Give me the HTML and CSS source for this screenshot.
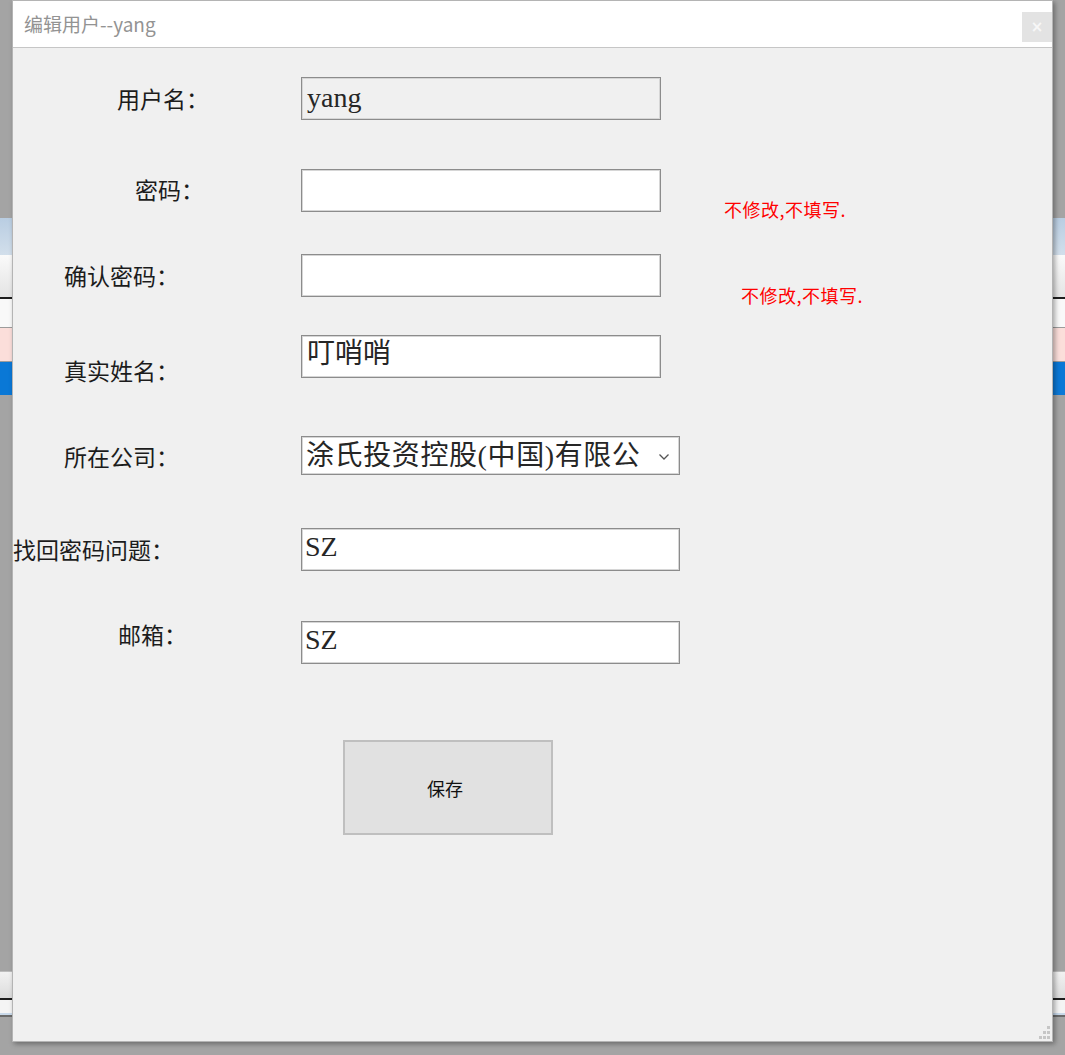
FILE: index.html
```html
<!DOCTYPE html>
<html lang="zh-CN">
<head>
<meta charset="utf-8">
<title>编辑用户</title>
<link rel="stylesheet" href="styles.css">
</head>
<body>
<div class="backdrop">
  <div class="bd-gap bd-gap-top"></div>
  <div class="bd-band bd-head"></div>
  <div class="bd-band bd-filter"></div>
  <div class="bd-band bd-rule"></div>
  <div class="bd-band bd-row"></div>
  <div class="bd-band bd-pink"></div>
  <div class="bd-band bd-blue"></div>
  <div class="bd-gap bd-gap-mid"></div>
  <div class="bd-band bd-foot"></div>
  <div class="bd-band bd-rule"></div>
  <div class="bd-band bd-foot2"></div>
  <div class="bd-band bd-line-blue"></div>
  <div class="bd-band bd-line-dark"></div>
</div>

<div class="dialog">
  <div class="dialog-title">
    <span class="title-text">编辑用户--yang</span>
    <button class="close-btn" type="button">×</button>
  </div>
  <div class="dialog-body">
    <form class="form">
      <div class="row row-1">
        <label class="label lbl-user">用户名：</label>
        <div class="field field-short field-readonly">yang</div>
      </div>
      <div class="row row-2">
        <label class="label lbl-pwd">密码：</label>
        <div class="field field-short"></div>
        <span class="hint hint-1">不修改,不填写.</span>
      </div>
      <div class="row row-3">
        <label class="label lbl-pwd2">确认密码：</label>
        <div class="field field-short"></div>
        <span class="hint hint-2">不修改,不填写.</span>
      </div>
      <div class="row row-4">
        <label class="label lbl-real lbl-low">真实姓名：</label>
        <div class="field field-short field-top">叮哨哨</div>
      </div>
      <div class="row row-5">
        <label class="label lbl-comp">所在公司：</label>
        <div class="select">
          <span class="select-text">涂氏投资控股(中国)有限公</span>
          <svg class="chev" width="12" height="8" viewBox="0 0 12 8"><path d="M1.5 1.5 L6 6 L10.5 1.5" fill="none" stroke="#555" stroke-width="1.3"/></svg>
        </div>
      </div>
      <div class="row row-6">
        <label class="label lbl-q">找回密码问题：</label>
        <div class="field field-long field-top">SZ</div>
      </div>
      <div class="row row-7">
        <label class="label lbl-mail lbl-high">邮箱：</label>
        <div class="field field-long field-top">SZ</div>
      </div>
      <div class="actions">
        <button class="save-btn" type="button">保存</button>
      </div>
    </form>
    <svg class="grip" width="14" height="14" viewBox="0 0 14 14">
      <rect x="10" y="0" width="3" height="3" fill="#c6c6c6"/>
      <rect x="6" y="5" width="3" height="3" fill="#c6c6c6"/>
      <rect x="10" y="5" width="3" height="3" fill="#c6c6c6"/>
      <rect x="2" y="10" width="3" height="3" fill="#c6c6c6"/>
      <rect x="6" y="10" width="3" height="3" fill="#c6c6c6"/>
      <rect x="10" y="10" width="3" height="3" fill="#c6c6c6"/>
    </svg>
  </div>
</div>
</body>
</html>
```

FILE: styles.css
```css
* { box-sizing: border-box; }

html, body {
  margin: 0;
  padding: 0;
  width: 1065px;
  height: 1055px;
  overflow: hidden;
  background: #a4a4a4;
  font-family: "Noto Sans CJK SC", "Noto Sans", sans-serif;
}

/* page behind the modal */
.backdrop {
  display: flex;
  flex-direction: column;
  width: 100%;
}
.bd-gap-top { height: 218px; }
.bd-head { height: 37px; background: linear-gradient(#b9cde2, #d2dfeb); }
.bd-filter { height: 42px; background: linear-gradient(#fafafa, #e4e4e4); }
.bd-rule { height: 2px; background: #1e1e1e; }
.bd-row { height: 29px; background: #f9f9f9; border-bottom: 1px solid #9c9c9c; }
.bd-pink { height: 34px; background: #fbdeda; border-bottom: 1px solid #9c9c9c; }
.bd-blue { height: 33px; background: #0a78d6; }
.bd-gap-mid { height: 576px; }
.bd-foot { height: 27px; background: linear-gradient(#f2f2f2, #dcdcdc); border-top: 1px solid #bdbdbd; }
.bd-foot2 { height: 13px; background: #f4f4f4; }
.bd-line-blue { height: 2px; background: #c9d9ea; }
.bd-line-dark { height: 2px; background: #6a6a6a; }

/* dialog */
.dialog {
  position: absolute;
  left: 12px;
  top: 0;
  width: 1041px;
  height: 1042px;
  background: #f0f0f0;
  border: 1px solid #b4b4b4;
  box-shadow: 2px 2px 5px rgba(0, 0, 0, 0.35);
  display: flex;
  flex-direction: column;
}

.dialog-title {
  height: 47px;
  flex: none;
  background: #fff;
  border-bottom: 1px solid #c6c6c6;
  display: flex;
  align-items: center;
  justify-content: space-between;
  padding-left: 11px;
}
.title-text {
  font-size: 19px;
  color: #939393;
  margin-top: -1px;
}
.close-btn {
  width: 30px;
  height: 30px;
  margin-top: 6px;
  margin-right: 0;
  border: none;
  background: #e3e3e3;
  color: #f7f7f7;
  font-family: "DejaVu Sans", sans-serif;
  font-size: 15px;
  font-weight: bold;
  line-height: 30px;
  padding: 0;
  text-align: center;
}

.dialog-body {
  flex: 1;
  position: relative;
}

.form {
  display: flex;
  flex-direction: column;
  padding-top: 29px;
}

.row {
  display: flex;
  align-items: flex-start;
  height: 43px;
}
.row-2 { margin-top: 49px; }
.row-3 { margin-top: 42px; }
.row-4 { margin-top: 38px; }
.row-5 { margin-top: 58px; height: 39px; }
.row-6 { margin-top: 53px; }
.row-7 { margin-top: 50px; }

.label {
  width: 288px;
  flex: none;
  font-size: 23px;
  line-height: 43px;
  color: #1c1c1c;
  white-space: nowrap;
}
.lbl-user { padding-left: 104px; }
.lbl-pwd { padding-left: 122px; margin-top: -1px; }
.lbl-pwd2 { padding-left: 51px; }
.lbl-real { padding-left: 51px; }
.lbl-comp { padding-left: 51px; margin-top: -1px; }
.lbl-q { padding-left: 0; }
.lbl-mail { padding-left: 105px; }
.lbl-low { margin-top: 14px; }
.lbl-high { margin-top: -8px; }

.field {
  height: 43px;
  background: #fff;
  border: 1px solid #8c8c8c;
  box-shadow: inset 0 0 0 1px #d6d6d6;
  font-family: "Liberation Serif", "Noto Sans CJK SC", serif;
  font-size: 28px;
  line-height: 39px;
  color: #262626;
  padding: 0 4px 2px 5px;
  white-space: nowrap;
  overflow: hidden;
}
.field-short { width: 360px; }
.field-long { width: 379px; padding-left: 3px; }
.field-readonly { background: #f0f0f0; }
.field-top { line-height: 36px; }

.select {
  width: 379px;
  height: 39px;
  background: #fff;
  border: 1px solid #8c8c8c;
  box-shadow: inset 0 0 0 1px #d6d6d6;
  display: flex;
  align-items: center;
  padding: 0 9px 0 4px;
  gap: 6px;
}
.select-text {
  flex: 1;
  white-space: nowrap;
  font-family: "Liberation Serif", "Noto Sans CJK SC", serif;
  font-size: 28px;
  line-height: 37px;
  letter-spacing: 0.6px;
  color: #262626;
}
.chev { flex: none; margin-top: 3px; }

.hint {
  font-size: 18px;
  line-height: 20px;
  letter-spacing: 0.5px;
  color: #ff0000;
  white-space: nowrap;
}
.hint-1 { margin-left: 63px; margin-top: 30px; }
.hint-2 { margin-left: 80px; margin-top: 31px; }

.actions {
  display: flex;
  padding-left: 330px;
  margin-top: 76px;
}
.save-btn {
  width: 210px;
  height: 95px;
  background: #e1e1e1;
  border: 2px solid #bfbfbf;
  font-family: "Noto Sans CJK SC", sans-serif;
  font-size: 18px;
  color: #111;
  padding: 0 6px 0 0;
}

.grip {
  position: absolute;
  right: 1px;
  bottom: 1px;
}
```
